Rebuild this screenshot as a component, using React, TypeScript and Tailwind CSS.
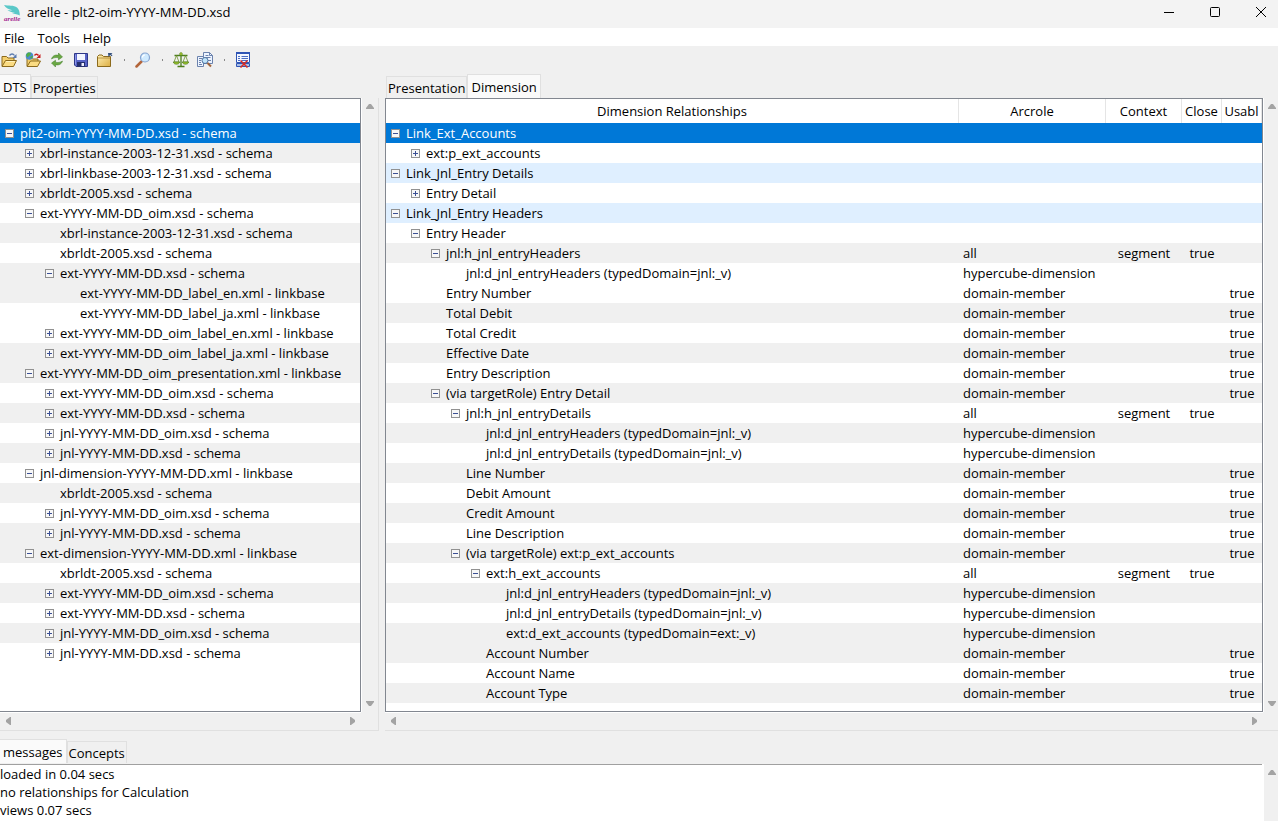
import React from 'react';
import clsx from 'clsx';

type TreeItem = {
  label: string;
  depth: number;
  state?: 'open' | 'closed';
  tone?: 'selected' | 'gray' | 'blue';
};

type RelationRow = TreeItem & {
  arcrole?: string;
  context?: string;
  closed?: string;
  usable?: string;
};

const dtsItems: TreeItem[] = [
  { label: 'plt2-oim-YYYY-MM-DD.xsd - schema', depth: 0, state: 'open', tone: 'selected' },
  { label: 'xbrl-instance-2003-12-31.xsd - schema', depth: 1, state: 'closed', tone: 'gray' },
  { label: 'xbrl-linkbase-2003-12-31.xsd - schema', depth: 1, state: 'closed' },
  { label: 'xbrldt-2005.xsd - schema', depth: 1, state: 'closed', tone: 'gray' },
  { label: 'ext-YYYY-MM-DD_oim.xsd - schema', depth: 1, state: 'open' },
  { label: 'xbrl-instance-2003-12-31.xsd - schema', depth: 2, tone: 'gray' },
  { label: 'xbrldt-2005.xsd - schema', depth: 2 },
  { label: 'ext-YYYY-MM-DD.xsd - schema', depth: 2, state: 'open', tone: 'gray' },
  { label: 'ext-YYYY-MM-DD_label_en.xml - linkbase', depth: 3, tone: 'gray' },
  { label: 'ext-YYYY-MM-DD_label_ja.xml - linkbase', depth: 3 },
  { label: 'ext-YYYY-MM-DD_oim_label_en.xml - linkbase', depth: 2, state: 'closed' },
  { label: 'ext-YYYY-MM-DD_oim_label_ja.xml - linkbase', depth: 2, state: 'closed', tone: 'gray' },
  { label: 'ext-YYYY-MM-DD_oim_presentation.xml - linkbase', depth: 1, state: 'open', tone: 'gray' },
  { label: 'ext-YYYY-MM-DD_oim.xsd - schema', depth: 2, state: 'closed' },
  { label: 'ext-YYYY-MM-DD.xsd - schema', depth: 2, state: 'closed', tone: 'gray' },
  { label: 'jnl-YYYY-MM-DD_oim.xsd - schema', depth: 2, state: 'closed' },
  { label: 'jnl-YYYY-MM-DD.xsd - schema', depth: 2, state: 'closed', tone: 'gray' },
  { label: 'jnl-dimension-YYYY-MM-DD.xml - linkbase', depth: 1, state: 'open' },
  { label: 'xbrldt-2005.xsd - schema', depth: 2, tone: 'gray' },
  { label: 'jnl-YYYY-MM-DD_oim.xsd - schema', depth: 2, state: 'closed' },
  { label: 'jnl-YYYY-MM-DD.xsd - schema', depth: 2, state: 'closed', tone: 'gray' },
  { label: 'ext-dimension-YYYY-MM-DD.xml - linkbase', depth: 1, state: 'open', tone: 'gray' },
  { label: 'xbrldt-2005.xsd - schema', depth: 2 },
  { label: 'ext-YYYY-MM-DD_oim.xsd - schema', depth: 2, state: 'closed', tone: 'gray' },
  { label: 'ext-YYYY-MM-DD.xsd - schema', depth: 2, state: 'closed' },
  { label: 'jnl-YYYY-MM-DD_oim.xsd - schema', depth: 2, state: 'closed', tone: 'gray' },
  { label: 'jnl-YYYY-MM-DD.xsd - schema', depth: 2, state: 'closed' },
];

const relationRows: RelationRow[] = [
  { label: 'Link_Ext_Accounts', depth: 0, state: 'open', tone: 'selected' },
  { label: 'ext:p_ext_accounts', depth: 1, state: 'closed' },
  { label: 'Link_Jnl_Entry Details', depth: 0, state: 'open', tone: 'blue' },
  { label: 'Entry Detail', depth: 1, state: 'closed' },
  { label: 'Link_Jnl_Entry Headers', depth: 0, state: 'open', tone: 'blue' },
  { label: 'Entry Header', depth: 1, state: 'open' },
  { label: 'jnl:h_jnl_entryHeaders', depth: 2, state: 'open', tone: 'gray', arcrole: 'all', context: 'segment', closed: 'true' },
  { label: 'jnl:d_jnl_entryHeaders (typedDomain=jnl:_v)', depth: 3, arcrole: 'hypercube-dimension' },
  { label: 'Entry Number', depth: 2, arcrole: 'domain-member', usable: 'true' },
  { label: 'Total Debit', depth: 2, tone: 'gray', arcrole: 'domain-member', usable: 'true' },
  { label: 'Total Credit', depth: 2, arcrole: 'domain-member', usable: 'true' },
  { label: 'Effective Date', depth: 2, tone: 'gray', arcrole: 'domain-member', usable: 'true' },
  { label: 'Entry Description', depth: 2, arcrole: 'domain-member', usable: 'true' },
  { label: '(via targetRole) Entry Detail', depth: 2, state: 'open', tone: 'gray', arcrole: 'domain-member', usable: 'true' },
  { label: 'jnl:h_jnl_entryDetails', depth: 3, state: 'open', arcrole: 'all', context: 'segment', closed: 'true' },
  { label: 'jnl:d_jnl_entryHeaders (typedDomain=jnl:_v)', depth: 4, tone: 'gray', arcrole: 'hypercube-dimension' },
  { label: 'jnl:d_jnl_entryDetails (typedDomain=jnl:_v)', depth: 4, arcrole: 'hypercube-dimension' },
  { label: 'Line Number', depth: 3, tone: 'gray', arcrole: 'domain-member', usable: 'true' },
  { label: 'Debit Amount', depth: 3, arcrole: 'domain-member', usable: 'true' },
  { label: 'Credit Amount', depth: 3, tone: 'gray', arcrole: 'domain-member', usable: 'true' },
  { label: 'Line Description', depth: 3, arcrole: 'domain-member', usable: 'true' },
  { label: '(via targetRole) ext:p_ext_accounts', depth: 3, state: 'open', tone: 'gray', arcrole: 'domain-member', usable: 'true' },
  { label: 'ext:h_ext_accounts', depth: 4, state: 'open', arcrole: 'all', context: 'segment', closed: 'true' },
  { label: 'jnl:d_jnl_entryHeaders (typedDomain=jnl:_v)', depth: 5, tone: 'gray', arcrole: 'hypercube-dimension' },
  { label: 'jnl:d_jnl_entryDetails (typedDomain=jnl:_v)', depth: 5, arcrole: 'hypercube-dimension' },
  { label: 'ext:d_ext_accounts (typedDomain=ext:_v)', depth: 5, tone: 'gray', arcrole: 'hypercube-dimension' },
  { label: 'Account Number', depth: 4, tone: 'gray', arcrole: 'domain-member', usable: 'true' },
  { label: 'Account Name', depth: 4, arcrole: 'domain-member', usable: 'true' },
  { label: 'Account Type', depth: 4, tone: 'gray', arcrole: 'domain-member', usable: 'true' },
];

const toneClass = (tone?: TreeItem['tone']) =>
  clsx(
    tone === 'selected' && 'bg-[#0078d7] text-white',
    tone === 'gray' && 'bg-[#f0f0f0]',
    tone === 'blue' && 'bg-[#dfefff]',
    !tone && 'bg-white'
  );

const TreeLabel: React.FC<{ item: TreeItem }> = ({ item }) => (
  <div className="flex h-5 items-center gap-[6px] whitespace-nowrap" style={{ paddingLeft: item.depth * 20 + 5 }}>
    {item.state ? (
      <button className="h-[9px] w-[9px] shrink-0" aria-label={item.state === 'open' ? 'Collapse' : 'Expand'}>
        <svg width="9" height="9" viewBox="0 0 9 9" shapeRendering="crispEdges" className="block">
          <rect x="0.5" y="0.5" width="8" height="8" fill="#f7f7f7" stroke="#919191" />
          <path d="M2 4.5h5" stroke="#3b4f94" />
          {item.state === 'closed' && <path d="M4.5 2v5" stroke="#3b4f94" />}
        </svg>
      </button>
    ) : (
      <span className="w-[9px] shrink-0" />
    )}
    <span>{item.label}</span>
  </div>
);

const Folder = () => (
  <>
    <path d="M1 14V4.5h4.5L7 6h6v3" fill="#f3cf6e" stroke="#8c6a1c" />
    <path d="M1 14.5 4.5 8.5h11L12.5 14.5z" fill="#fbdc83" stroke="#8c6a1c" />
    <path d="M5.2 9.5h8.6" stroke="#fff2bd" />
  </>
);

const OpenIcon = () => (
  <svg width="16" height="16" viewBox="0 0 16 16" fill="none">
    <Folder />
    <path d="M8.5 3.5c1.5-2 3.7-2 5 0" stroke="#5a7bb0" strokeWidth="1.3" />
    <path d="M15.5 2v4h-4z" fill="#5a7bb0" />
  </svg>
);

const WebOpenIcon = () => (
  <svg width="16" height="16" viewBox="0 0 16 16" fill="none">
    <path d="M2 14V5.5h4L7.5 7H13v2" fill="#f3cf6e" stroke="#8c6a1c" />
    <path d="M2 14.5 5.5 9h10l-3 5.5z" fill="#fbdc83" stroke="#8c6a1c" />
    <circle cx="4.5" cy="4" r="3.8" fill="#4b8ad2" />
    <path d="M1 3 3 .6l3 .2-.5 2L4 4 2.5 5.5zM5 5l2.5-1.5.5 1-2 2.5z" fill="#4fae45" />
    <path d="M9.5 3.5c1-1.8 2.7-1.8 4 0" stroke="#c81e1e" strokeWidth="1.5" />
    <path d="M15.5 2v4h-4z" fill="#c81e1e" />
  </svg>
);

const ReloadIcon = () => (
  <svg width="16" height="16" viewBox="0 0 16 16">
    <path d="M2.5 7C3.5 3.5 6.5 2.5 9.5 3.3V1l4 4-4 2.8V5.8C7 5.2 5 5.5 2.5 7z" fill="#6aa842" stroke="#3c7a25" strokeWidth=".5" />
    <path d="M13.5 9c-1 3.5-4 4.5-7 3.7V15l-4-4 4-2.8v2c2.5.6 4.5.3 7-1.2z" fill="#6aa842" stroke="#3c7a25" strokeWidth=".5" />
  </svg>
);

const SaveIcon = () => (
  <svg width="16" height="16" viewBox="0 0 16 16">
    <path d="M1.5 1.5h13v13H3l-1.5-1.5z" fill="#5763c7" stroke="#2e3787" />
    <path d="M4 2h8v6H4z" fill="#f2f5ff" />
    <path d="M4 10h8v5H4z" fill="#252f6e" />
    <path d="M8.5 11H11v3H8.5z" fill="#eef" />
    <path d="M2.5 2.5v10" stroke="#8d97e8" />
  </svg>
);

const CloseFolderIcon = () => (
  <svg width="16" height="16" viewBox="0 0 16 16">
    <defs>
      <linearGradient id="folder" x1="0" y1="0" x2="1" y2="1">
        <stop offset="0" stopColor="#fff0b5" />
        <stop offset="1" stopColor="#dcae43" />
      </linearGradient>
    </defs>
    <path d="M.5 14.5v-10L2 3h3l1.5 1.5h7v10z" fill="url(#folder)" stroke="#8c6a1c" />
    <path d="M1 6h12" stroke="#a88433" strokeWidth=".8" />
    <path d="M11 1h4.5l-1.3 1.3 1.3 1.2-.8.8L13.2 3 11.5 5z" fill="#34517f" />
  </svg>
);

const FindIcon = () => (
  <svg width="16" height="16" viewBox="0 0 16 16">
    <path d="M6.5 9.5 1.5 14.5" stroke="#b3653a" strokeWidth="2.5" strokeLinecap="round" />
    <circle cx="10" cy="5.5" r="4.500" fill="#cfeaff" stroke="#86a4d0" strokeWidth="1.2" />
    <path d="M7.5 5.5C7.5 4 8.5 3 10 3" fill="none" stroke="#fff" strokeWidth="1.2" />
  </svg>
);

const ScalesIcon = () => (
  <svg width="16" height="16" viewBox="0 0 16 16" fill="none">
    <path d="M8 1v13M1.5 3.5h13M4.5 14.5h7" stroke="#4c7d1c" strokeWidth="1.3" />
    <path d="M3.5 3.5 1 10h5zM12.5 3.5 10 10h5z" stroke="#6b8f28" strokeWidth=".8" />
    <path d="M.3 10h6.4c-.4 3-6 3-6.4 0zM9.300 10h6.400c-.4 3-6 3-6.400 0z" fill="#9dc62d" stroke="#3f6d16" strokeWidth=".6" />
    <circle cx="8" cy="2" r="1.4" fill="#a9c834" stroke="#4c7d1c" strokeWidth=".5" />
  </svg>
);

const CompareIcon = () => (
  <svg width="16" height="16" viewBox="0 0 16 16" fill="none">
    <path d="M6.5.5h6l3 3v8h-9z" fill="#edf4ff" stroke="#6b82ad" />
    <path d="M12.5.5v3h3M8.5 3.5h3M8.5 5.5h5M11 8.5h3" stroke="#6b82ad" />
    <path d="M.5 4.5h6v10h-6z" fill="#edf4ff" stroke="#6b82ad" />
    <path d="M2 6.5h3M2 8.5h2M2 10.5h2M2 12.5h3" stroke="#6b82ad" />
    <circle cx="8" cy="8.5" r="3" fill="#bfe4fb" stroke="#4f719e" />
    <path d="m10.5 11 3.5 3.5" stroke="#a1653d" strokeWidth="2" />
  </svg>
);

const ClearLogIcon = () => (
  <svg width="16" height="16" viewBox="0 0 16 16" fill="none">
    <path d="M1.5.5h13v10h-13z" fill="#f4f7ff" stroke="#2f55b5" />
    <path d="M1 0h14v2H1z" fill="#2f55b5" />
    <path d="M3 4.5h2M6.5 4.5H13M3 6.5h2M6.5 6.5H13M3 8.5h2M6.5 8.5H13" stroke="#4a6dc4" />
    <path d="M1.5 11.5h13v3h-13z" fill="#a9bfe8" stroke="#2f55b5" />
    <path d="m5.5 8.5 7 7M12.5 8.5l-7 7" stroke="#dc2a20" strokeWidth="1.5" />
  </svg>
);

const Logo = () => (
  <svg width="17" height="18" viewBox="0 0 17 18" className="overflow-visible">
    <path d="M0 0c4 1 10 0 13 2.5 2 1.5 2.8 4.5 2.8 8-2-1.5-5-1-7.8-2.5 1 0 2 0 3-.3C8 7.5 5 6.5 3.5 5c1.500.3 3 .5 5 .3C5 4.5 1.5 3 0 0z" fill="#5ac8c8" />
    <text x="0" y="16" fontSize="7" fontWeight="700" fontStyle="italic" fontFamily="Liberation Serif, serif" fill="#a3238e">arelle</text>
  </svg>
);

const ToolSeparator = () => (
  <span className="flex w-[6px] justify-center">
    <span className="h-[2px] w-px bg-[#8a8a8a]" />
  </span>
);

const tools = [
  { name: 'Open local file', icon: OpenIcon },
  { name: 'Open web file', icon: WebOpenIcon },
  { name: 'Reload', icon: ReloadIcon },
  { name: 'Save', icon: SaveIcon },
  { name: 'Close', icon: CloseFolderIcon },
  null,
  { name: 'Find', icon: FindIcon },
  null,
  { name: 'Validate', icon: ScalesIcon },
  { name: 'Compare DTSes', icon: CompareIcon },
  null,
  { name: 'Clear messages', icon: ClearLogIcon },
];

const Arrow: React.FC<{ dir: 'up' | 'down' | 'left' | 'right' }> = ({ dir }) => {
  const paths = {
    up: 'M0 7V6l3-4h2l3 4v1z',
    down: 'M0 1v1l3 4h2l3-4V1z',
    left: 'M7 0H6L2 3v2l4 3h1z',
    right: 'M1 0h1l4 3v2L2 8H1z',
  };
  const vertical = dir === 'up' || dir === 'down';
  return (
    <button
      className={clsx('flex h-4 items-center justify-center', vertical ? 'w-3' : 'w-4')}
      aria-label={`Scroll ${dir}`}
    >
      <svg width="8" height="8" viewBox="0 0 8 8">
        <path d={paths[dir]} fill="#a3a3a3" />
      </svg>
    </button>
  );
};

const ScrollPane: React.FC<{ children: React.ReactNode; flush?: boolean }> = ({ children, flush }) => (
  <div className="grid min-h-0 flex-1 grid-cols-[minmax(0,1fr)_15px] grid-rows-[minmax(0,1fr)_18px]">
    <div className={clsx('overflow-hidden border border-[#828790] bg-white', flush && 'border-l-0')}>{children}</div>
    <div className="flex flex-col items-end justify-between border-l border-white">
      <Arrow dir="up" />
      <Arrow dir="down" />
    </div>
    <div className="flex items-start justify-between border-t border-white">
      <Arrow dir="left" />
      <Arrow dir="right" />
    </div>
  </div>
);

const Tabs: React.FC<{ names: string[]; active: string; inset?: boolean }> = ({ names, active, inset }) => (
  <div role="tablist" className={clsx('flex h-6 items-end', inset && 'pl-px')}>
    {names.map(name => (
      <button
        key={name}
        role="tab"
        aria-selected={name === active}
        className={clsx(
          'border border-b-0 border-[#e0e0e0]',
          name === active ? 'h-6 bg-[#fafafa] px-[3px]' : 'h-[22px] bg-[#f0f0f0] px-px',
          name === active && !inset && 'border-l-0'
        )}
      >
        {name}
      </button>
    ))}
  </div>
);

const headers = ['Dimension Relationships', 'Arcrole', 'Context', 'Close', 'Usabl'];

const App: React.FC = () => {
  return (
    <div className="flex h-screen flex-col overflow-hidden bg-[#f0f0f0] font-['Open_Sans','Noto_Sans',sans-serif] text-[13px] leading-5 text-black">
      {/* Title bar */}
      <header className="flex h-7 shrink-0 items-center bg-[#f3f3f3] pl-1">
        <Logo />
        <h1 className="flex-1 pb-1 pl-[6px]">arelle - plt2-oim-YYYY-MM-DD.xsd</h1>
        <div className="flex h-6 gap-[14px] self-start pr-px">
          <button aria-label="Minimize" className="flex w-8 items-center justify-center">
            <svg width="10" height="10" viewBox="0 0 10 10"><path d="M0 5.5h10" stroke="#000" /></svg>
          </button>
          <button aria-label="Maximize" className="flex w-8 items-center justify-center">
            <svg width="10" height="10" viewBox="0 0 10 10"><rect x=".5" y=".5" width="9" height="9" rx="1" fill="none" stroke="#000" /></svg>
          </button>
          <button aria-label="Close" className="flex w-8 items-center justify-center">
            <svg width="10" height="10" viewBox="0 0 10 10"><path d="m0 0 10 10M10 0 0 10" stroke="#000" /></svg>
          </button>
        </div>
      </header>

      {/* Menu bar */}
      <nav className="flex h-[18px] shrink-0 items-start gap-[13px] bg-white pl-1">
        <button>File</button>
        <button>Tools</button>
        <button>Help</button>
      </nav>

      {/* Toolbar */}
      <div role="toolbar" className="flex h-7 shrink-0 items-center gap-2 pl-px">
        {tools.map((tool, i) =>
          tool ? (
            <button key={tool.name} aria-label={tool.name} title={tool.name} className="w-4">
              <tool.icon />
            </button>
          ) : (
            <ToolSeparator key={i} />
          )
        )}
      </div>

      {/* Tree and relationship panes */}
      <main className="flex min-h-0 flex-1 gap-[6px]">
        <section className="flex w-[379px] shrink-0 flex-col">
          <Tabs names={['DTS', 'Properties']} active="DTS" />
          <div className="flex min-h-0 flex-1 border-r border-b border-[#e0e0e0] pr-[2px]">
            <ScrollPane flush>
              <ul className="pt-6">
                {dtsItems.map((item, i) => (
                  <li key={i} className={toneClass(item.tone)}>
                    <TreeLabel item={item} />
                  </li>
                ))}
              </ul>
            </ScrollPane>
          </div>
        </section>

        <section className="flex min-w-0 flex-1 flex-col">
          <Tabs names={['Presentation', 'Dimension']} active="Dimension" inset />
          <div className="flex min-h-0 flex-1 border-b border-[#e0e0e0]">
            <ScrollPane>
              <table className="w-full table-fixed border-separate border-spacing-0">
                <colgroup>
                  <col />
                  <col className="w-[147px]" />
                  <col className="w-[76px]" />
                  <col className="w-[40px]" />
                  <col className="w-[40px]" />
                </colgroup>
                <thead>
                  <tr className="h-6">
                    {headers.map(header => (
                      <th key={header} className="border-r border-[#e5e5e5] p-0 font-normal">
                        {header}
                      </th>
                    ))}
                  </tr>
                </thead>
                <tbody>
                  {relationRows.map((row, i) => (
                    <tr key={i} className={toneClass(row.tone)}>
                      <td className="p-0"><TreeLabel item={row} /></td>
                      <td className="p-0 pl-1">{row.arcrole}</td>
                      <td className="p-0 text-center">{row.context}</td>
                      <td className="p-0 text-center">{row.closed}</td>
                      <td className="p-0 text-center">{row.usable}</td>
                    </tr>
                  ))}
                </tbody>
              </table>
            </ScrollPane>
          </div>
        </section>
      </main>

      {/* Messages */}
      <section className="shrink-0 pt-2">
        <Tabs names={['messages', 'Concepts']} active="messages" />
        <div className="flex h-[58px] pt-px">
          <div role="log" className="flex-1 border-t border-[#a0a0a0] bg-white leading-[18px]">
            <p>loaded in 0.04 secs</p>
            <p>no relationships for Calculation</p>
            <p>views 0.07 secs</p>
          </div>
          <div className="flex w-4 justify-end border-l-2 border-white">
            <Arrow dir="up" />
          </div>
        </div>
      </section>
    </div>
  );
};

export default App;
